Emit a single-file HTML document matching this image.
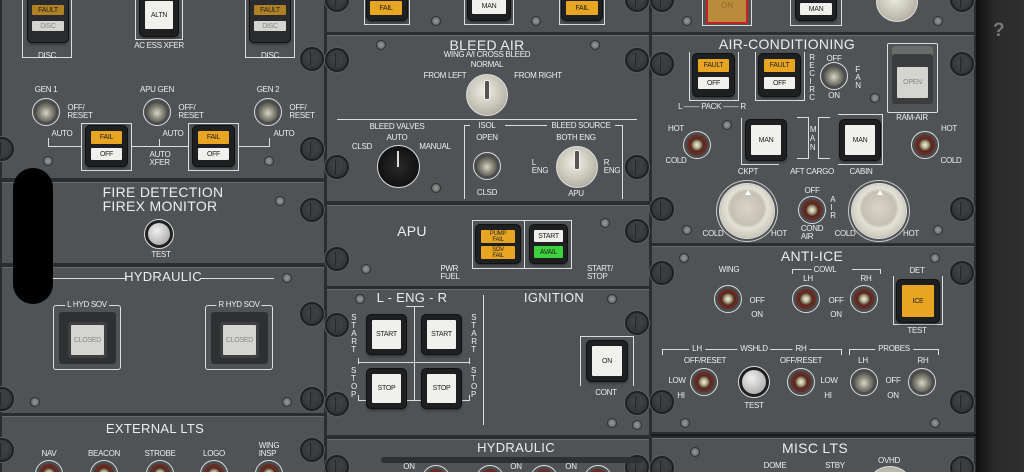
<!DOCTYPE html>
<html style="width:1024px;height:472px;overflow:hidden"><head><meta charset="utf-8"><style>
*{margin:0;padding:0;box-sizing:border-box}
body{width:1024px;height:472px;overflow:hidden;background:#1a1b1c;font-family:"Liberation Sans",sans-serif}
#w{position:relative;width:1024px;height:472px;overflow:hidden}
.p{position:absolute;background:#505356;border:2px solid #2a2c2e;box-shadow:inset 0 1px 0 #676a6d}
.t{position:absolute;color:#eceded;font-size:8px;white-space:nowrap;transform:translateX(-50%);line-height:1;letter-spacing:-0.3px}
.h{font-size:14px;letter-spacing:0.3px}
.k{position:absolute;width:24px;height:24px;border-radius:50%;background:radial-gradient(circle at 50% 40%,#45484b,#2b2d2f);border:2px solid #1f2022;box-shadow:0 0 0 1px #5a5d60}
.k:after{content:"";position:absolute;left:8px;top:3px;width:4px;height:14px;background:#3a3c3e;border-left:1px solid #252627}
.s{position:absolute;width:10px;height:10px;border-radius:50%;background:radial-gradient(#9a9c9e,#555);border:1px solid #2e2f30}
.tg{position:absolute;width:28px;height:28px;border-radius:50%;border:1px solid #dcdcdc;background:#4a4c4f}
.tg:before{content:"";position:absolute;left:3px;top:3px;width:20px;height:20px;border-radius:50%;background:radial-gradient(circle at 50% 50%,#f4f0e0 0,#b8b090 22%,#4a2a22 45%,#7a2a1e 62%,#2a2a2a 80%)}
.tg.g:before{background:radial-gradient(circle at 50% 55%,#d8d6c8 0,#8a887a 40%,#55564f 70%,#2a2a2a 85%)}
.bz{position:absolute;background:#1e1f20;border-radius:4px;box-shadow:0 0 0 1px #111,0 2px 3px #0008}
.l{position:absolute;font-size:7px;color:#222;text-align:center;display:flex;align-items:center;justify-content:center;border-radius:1px;letter-spacing:-0.3px}
.am{background:#e8a521}.wh{background:#f0f0ec}.gr{background:#3ed33e}.dim{background:#d4d4d0;color:#888}
.ln{position:absolute;border-color:#dedede;border-style:solid;border-width:0}
.kn{position:absolute;border-radius:50%;border:1px solid #ddd}
.bk{position:absolute;border-radius:50%;background:radial-gradient(circle at 50% 45%,#d8d4c8 0,#c4c0b3 42%,#e4e1d6 50%,#c9c5b8 75%,#8e8b80 100%);box-shadow:0 0 0 1px #ddd,0 0 0 3px #505356,0 0 0 4px #ccc}
</style></head><body><div id="w">
<div style="position:absolute;left:975px;top:0;width:49px;height:472px;background:linear-gradient(90deg,#0e0e0e,#2a2a2a 40%,#303030)"></div>
<div style="position:absolute;left:993px;top:20px;font-size:19px;font-weight:bold;color:#777">?</div>

<div class="p" style="left:0;top:-4px;width:326px;height:184px"></div>
<div class="p" style="left:0;top:180px;width:326px;height:85px"></div>
<div class="p" style="left:0;top:265px;width:326px;height:150px"></div>
<div class="p" style="left:0;top:414px;width:326px;height:62px"></div>
<div class="p" style="left:325px;top:-4px;width:326px;height:38px"></div>
<div class="p" style="left:325px;top:33px;width:326px;height:170px"></div>
<div class="p" style="left:325px;top:203px;width:326px;height:85px"></div>
<div class="p" style="left:325px;top:287px;width:326px;height:150px"></div>
<div class="p" style="left:325px;top:437px;width:326px;height:40px"></div>
<div class="p" style="left:650px;top:-4px;width:326px;height:38px"></div>
<div class="p" style="left:650px;top:33px;width:326px;height:212px"></div>
<div class="p" style="left:650px;top:244px;width:326px;height:190px"></div>
<div class="p" style="left:650px;top:436px;width:326px;height:40px"></div>

<div class="k" style="left:-10px;top:137px"></div><div class="k" style="left:300px;top:137px"></div>
<div class="k" style="left:300px;top:198px"></div><div class="k" style="left:300px;top:47px"></div>
<div class="k" style="left:300px;top:302px"></div><div class="k" style="left:300px;top:387px"></div>
<div class="k" style="left:-10px;top:387px"></div><div class="k" style="left:-10px;top:438px"></div><div class="k" style="left:300px;top:438px"></div>
<div class="k" style="left:325px;top:-12px"></div><div class="k" style="left:625px;top:-12px"></div>
<div class="k" style="left:325px;top:48px"></div><div class="k" style="left:625px;top:48px"></div>
<div class="k" style="left:325px;top:155px"></div><div class="k" style="left:625px;top:155px"></div>
<div class="k" style="left:325px;top:247px"></div><div class="k" style="left:625px;top:219px"></div>
<div class="k" style="left:325px;top:313px"></div><div class="k" style="left:625px;top:311px"></div>
<div class="k" style="left:325px;top:392px"></div><div class="k" style="left:625px;top:391px"></div>
<div class="k" style="left:325px;top:455px"></div><div class="k" style="left:625px;top:455px"></div>
<div class="k" style="left:650px;top:-12px"></div><div class="k" style="left:950px;top:-12px"></div>
<div class="k" style="left:650px;top:52px"></div><div class="k" style="left:950px;top:52px"></div>
<div class="k" style="left:650px;top:197px"></div><div class="k" style="left:950px;top:197px"></div>
<div class="k" style="left:650px;top:261px"></div><div class="k" style="left:950px;top:261px"></div>
<div class="k" style="left:650px;top:390px"></div><div class="k" style="left:950px;top:390px"></div>
<div class="k" style="left:650px;top:456px"></div><div class="k" style="left:950px;top:456px"></div>

<div class="s" style="left:43px;top:156px"></div><div class="s" style="left:264px;top:156px"></div>
<div class="s" style="left:275px;top:196px"></div><div class="s" style="left:282px;top:273px"></div>
<div class="s" style="left:30px;top:397px"></div><div class="s" style="left:282px;top:397px"></div>
<div class="s" style="left:431px;top:16px"></div><div class="s" style="left:531px;top:16px"></div>
<div class="s" style="left:376px;top:40px"></div><div class="s" style="left:590px;top:40px"></div>
<div class="s" style="left:431px;top:183px"></div><div class="s" style="left:600px;top:218px"></div><div class="s" style="left:361px;top:264px"></div>
<div class="s" style="left:355px;top:294px"></div><div class="s" style="left:607px;top:294px"></div><div class="s" style="left:607px;top:418px"></div><div class="s" style="left:632px;top:420px"></div>
<div class="s" style="left:682px;top:16px"></div><div class="s" style="left:933px;top:16px"></div>
<div class="s" style="left:870px;top:93px"></div><div class="s" style="left:722px;top:120px"></div>
<div class="s" style="left:682px;top:225px"></div><div class="s" style="left:933px;top:225px"></div>
<div class="s" style="left:679px;top:253px"></div><div class="s" style="left:930px;top:253px"></div>
<div class="s" style="left:680px;top:418px"></div><div class="s" style="left:930px;top:418px"></div>
<div class="s" style="left:690px;top:447px"></div>

<div class="ln" style="left:22px;top:0;width:50px;height:58px;border-width:0 1px 1px 1px"></div>
<div class="bz" style="left:28px;top:-4px;width:40px;height:46px;background:#2a2b2c"></div>
<div class="l am" style="left:32px;top:5px;width:32px;height:10px;opacity:.7">FAULT</div>
<div class="l dim" style="left:32px;top:21px;width:32px;height:10px">DISC</div>
<div class="t" style="left:47px;top:52px">DISC</div>
<div class="ln" style="left:245px;top:0;width:50px;height:58px;border-width:0 1px 1px 1px"></div>
<div class="bz" style="left:250px;top:-4px;width:40px;height:46px;background:#2a2b2c"></div>
<div class="l am" style="left:254px;top:5px;width:32px;height:10px;opacity:.7">FAULT</div>
<div class="l dim" style="left:254px;top:21px;width:32px;height:10px">DISC</div>
<div class="t" style="left:270px;top:52px">DISC</div>
<div class="ln" style="left:135px;top:0;width:48px;height:40px;border-width:0 1px 1px 1px"></div>
<div class="bz" style="left:140px;top:-4px;width:38px;height:40px"></div>
<div class="l wh" style="left:145px;top:1px;width:28px;height:28px">ALTN</div>
<div class="t" style="left:159px;top:42px">AC ESS XFER</div>

<div class="t" style="left:46px;top:86px">GEN 1</div><div class="t" style="left:157px;top:86px">APU GEN</div><div class="t" style="left:268px;top:86px">GEN 2</div>
<div class="tg g" style="left:32px;top:98px"></div><div class="tg g" style="left:143px;top:98px"></div><div class="tg g" style="left:254px;top:98px"></div>
<div class="t" style="left:80px;top:104px;text-align:left">OFF/<br>RESET</div><div class="t" style="left:191px;top:104px">OFF/<br>RESET</div><div class="t" style="left:302px;top:104px">OFF/<br>RESET</div>
<div class="t" style="left:62px;top:130px">AUTO</div><div class="t" style="left:173px;top:130px">AUTO</div><div class="t" style="left:284px;top:130px">AUTO</div>
<div class="ln" style="left:48px;top:138px;width:34px;height:9px;border-width:0 0 1px 1px"></div>
<div class="ln" style="left:81px;top:123px;width:51px;height:48px;border-width:1px"></div>
<div class="ln" style="left:132px;top:146px;width:57px;height:1px;border-width:1px 0 0 0"></div>
<div class="ln" style="left:159px;top:139px;width:1px;height:8px;border-width:0 0 0 1px"></div>
<div class="ln" style="left:188px;top:123px;width:51px;height:48px;border-width:1px"></div>
<div class="ln" style="left:239px;top:138px;width:31px;height:9px;border-width:0 1px 1px 0"></div>
<div class="bz" style="left:86px;top:126px;width:41px;height:40px"></div>
<div class="l am" style="left:91px;top:131px;width:31px;height:13px">FAIL</div>
<div class="l wh" style="left:91px;top:148px;width:31px;height:12px">OFF</div>
<div class="bz" style="left:193px;top:126px;width:41px;height:40px"></div>
<div class="l am" style="left:198px;top:131px;width:31px;height:13px">FAIL</div>
<div class="l wh" style="left:198px;top:148px;width:31px;height:12px">OFF</div>
<div class="t" style="left:160px;top:151px">AUTO<br>XFER</div>

<div class="t h" style="left:163px;top:185px">FIRE DETECTION<br>FIREX MONITOR</div>
<div class="kn" style="left:144px;top:219px;width:30px;height:30px;background:#222"></div>
<div style="position:absolute;left:148px;top:223px;width:22px;height:22px;border-radius:50%;background:radial-gradient(circle at 40% 35%,#f0f0f0,#9a9a9a)"></div>
<div class="t" style="left:161px;top:251px">TEST</div>

<div class="ln" style="left:52px;top:278px;width:75px;height:1px;border-width:1px 0 0 0"></div>
<div class="ln" style="left:200px;top:278px;width:74px;height:1px;border-width:1px 0 0 0"></div>
<div class="t h" style="left:163px;top:270px;font-size:13px">HYDRAULIC</div>
<div class="ln" style="left:53px;top:305px;width:68px;height:65px;border-width:1px;border-radius:3px"></div>
<div class="t" style="left:87px;top:301px;background:#505356;padding:0 2px">L HYD SOV</div>
<div style="position:absolute;left:59px;top:312px;width:57px;height:52px;background:#2e3032;border-radius:3px"></div>
<div class="l dim" style="left:71px;top:325px;width:33px;height:30px;box-shadow:0 0 0 3px #3e4042">CLOSED</div>
<div class="ln" style="left:205px;top:305px;width:68px;height:65px;border-width:1px;border-radius:3px"></div>
<div class="t" style="left:239px;top:301px;background:#505356;padding:0 2px">R HYD SOV</div>
<div style="position:absolute;left:211px;top:312px;width:57px;height:52px;background:#2e3032;border-radius:3px"></div>
<div class="l dim" style="left:223px;top:325px;width:33px;height:30px;box-shadow:0 0 0 3px #3e4042">CLOSED</div>

<div class="t h" style="left:155px;top:422px;font-size:13px">EXTERNAL LTS</div>
<div class="t" style="left:49px;top:450px">NAV</div><div class="t" style="left:104px;top:450px">BEACON</div><div class="t" style="left:160px;top:450px">STROBE</div><div class="t" style="left:214px;top:450px">LOGO</div><div class="t" style="left:269px;top:442px">WING<br>INSP</div>
<div class="tg" style="left:35px;top:460px"></div><div class="tg" style="left:90px;top:460px"></div><div class="tg" style="left:146px;top:460px"></div><div class="tg" style="left:200px;top:460px"></div><div class="tg" style="left:255px;top:460px"></div>

<div style="position:absolute;left:13px;top:168px;width:40px;height:136px;background:#000;border-radius:20px"></div>

<div class="ln" style="left:364px;top:0;width:46px;height:25px;border-width:0 1px 1px 1px"></div>
<div class="bz" style="left:367px;top:-4px;width:40px;height:24px"></div><div class="l am" style="left:370px;top:1px;width:32px;height:14px">FAIL</div>
<div class="ln" style="left:464px;top:0;width:50px;height:25px;border-width:0 1px 1px 1px"></div>
<div class="bz" style="left:468px;top:-4px;width:42px;height:24px"></div><div class="l wh" style="left:472px;top:-2px;width:34px;height:16px">MAN</div>
<div class="ln" style="left:559px;top:0;width:46px;height:25px;border-width:0 1px 1px 1px"></div>
<div class="bz" style="left:562px;top:-4px;width:40px;height:24px"></div><div class="l am" style="left:566px;top:1px;width:32px;height:14px">FAIL</div>

<div class="t h" style="left:487px;top:38px">BLEED AIR</div>
<div class="t" style="left:487px;top:51px">WING A/I CROSS BLEED</div>
<div class="t" style="left:487px;top:61px">NORMAL</div>
<div class="t" style="left:445px;top:72px">FROM LEFT</div>
<div class="t" style="left:538px;top:72px">FROM RIGHT</div>
<div class="kn" style="left:466px;top:74px;width:42px;height:42px;background:radial-gradient(circle at 45% 40%,#f2f0e6,#b8b5a8 70%,#6a6860)"></div>
<div style="position:absolute;left:484px;top:80px;width:6px;height:20px;background:#555;border:1px solid #eee;border-radius:2px"></div>
<div class="ln" style="left:337px;top:119px;width:300px;height:1px;border-width:1px 0 0 0"></div>
<div class="t" style="left:397px;top:123px">BLEED VALVES</div>
<div class="t" style="left:397px;top:134px">AUTO</div>
<div class="t" style="left:362px;top:143px">CLSD</div>
<div class="t" style="left:435px;top:143px">MANUAL</div>
<div class="kn" style="left:377px;top:145px;width:43px;height:43px;background:radial-gradient(circle at 50% 50%,#2a2a2a,#111 70%,#333)"></div>
<div style="position:absolute;left:397px;top:151px;width:2px;height:16px;background:#ddd"></div>
<div class="ln" style="left:464px;top:125px;width:1px;height:74px;border-width:0 0 0 1px"></div>
<div class="ln" style="left:464px;top:125px;width:6px;height:1px;border-width:1px 0 0 0"></div>
<div class="ln" style="left:505px;top:125px;width:42px;height:1px;border-width:1px 0 0 0"></div>
<div class="ln" style="left:615px;top:125px;width:8px;height:74px;border-width:1px 1px 0 0"></div>
<div class="t" style="left:487px;top:122px">ISOL</div>
<div class="t" style="left:581px;top:122px">BLEED SOURCE</div>
<div class="t" style="left:487px;top:134px">OPEN</div>
<div class="tg g" style="left:473px;top:152px"></div>
<div class="t" style="left:487px;top:189px">CLSD</div>
<div class="t" style="left:576px;top:134px">BOTH ENG</div>
<div class="t" style="left:540px;top:159px">L<br>ENG</div>
<div class="t" style="left:612px;top:159px">R<br>ENG</div>
<div class="t" style="left:576px;top:190px">APU</div>
<div class="kn" style="left:556px;top:146px;width:42px;height:42px;background:radial-gradient(circle at 45% 40%,#f2f0e6,#b8b5a8 70%,#6a6860)"></div>
<div style="position:absolute;left:574px;top:150px;width:6px;height:20px;background:#555;border:1px solid #eee;border-radius:2px"></div>

<div class="t h" style="left:412px;top:224px">APU</div>
<div class="t" style="left:450px;top:265px">PWR<br>FUEL</div>
<div class="t" style="left:600px;top:265px">START/<br>STOP</div>
<div class="ln" style="left:472px;top:220px;width:53px;height:49px;border-width:1px"></div>
<div class="ln" style="left:524px;top:220px;width:48px;height:49px;border-width:1px 1px 1px 0"></div>
<div class="bz" style="left:476px;top:225px;width:44px;height:38px"></div>
<div class="l am" style="left:481px;top:230px;width:34px;height:13px;font-size:6px;line-height:6px">PUMP<br>FAIL</div>
<div class="l am" style="left:481px;top:246px;width:34px;height:13px;font-size:6px;line-height:6px">SOV<br>FAIL</div>
<div class="bz" style="left:530px;top:225px;width:37px;height:38px"></div>
<div class="l wh" style="left:534px;top:230px;width:29px;height:12px">START</div>
<div class="l gr" style="left:534px;top:246px;width:29px;height:12px">AVAIL</div>

<div class="t h" style="left:412px;top:291px;font-size:13px">L - ENG - R</div>
<div class="ln" style="left:406px;top:306px;width:18px;height:1px;border-width:1px 0 0 0"></div>
<div class="ln" style="left:414px;top:306px;width:1px;height:95px;border-width:0 0 0 1px"></div>
<div class="ln" style="left:358px;top:362px;width:112px;height:1px;border-width:1px 0 0 0"></div>
<div class="ln" style="left:358px;top:358px;width:112px;height:6px;border-width:0 1px 0 1px"></div>
<div class="ln" style="left:358px;top:395px;width:112px;height:6px;border-width:0 1px 1px 1px"></div>
<div class="t" style="left:354px;top:314px;line-height:8px">S<br>T<br>A<br>R<br>T</div>
<div class="t" style="left:474px;top:314px;line-height:8px">S<br>T<br>A<br>R<br>T</div>
<div class="t" style="left:354px;top:367px;line-height:8px">S<br>T<br>O<br>P</div>
<div class="t" style="left:474px;top:367px;line-height:8px">S<br>T<br>O<br>P</div>
<div class="bz" style="left:367px;top:315px;width:39px;height:39px"></div><div class="l wh" style="left:372px;top:320px;width:29px;height:29px">START</div>
<div class="bz" style="left:422px;top:315px;width:39px;height:39px"></div><div class="l wh" style="left:427px;top:320px;width:29px;height:29px">START</div>
<div class="bz" style="left:367px;top:369px;width:39px;height:39px"></div><div class="l wh" style="left:372px;top:374px;width:29px;height:29px">STOP</div>
<div class="bz" style="left:422px;top:369px;width:39px;height:39px"></div><div class="l wh" style="left:427px;top:374px;width:29px;height:29px">STOP</div>
<div class="ln" style="left:483px;top:295px;width:1px;height:130px;border-width:0 0 0 1px"></div>
<div class="t h" style="left:554px;top:291px;font-size:13px">IGNITION</div>
<div class="ln" style="left:580px;top:336px;width:54px;height:50px;border-width:1px 1px 0 1px"></div>
<div class="bz" style="left:587px;top:341px;width:40px;height:40px"></div><div class="l wh" style="left:592px;top:346px;width:30px;height:30px">ON</div>
<div class="t" style="left:606px;top:389px">CONT</div>

<div class="t h" style="left:516px;top:441px;font-size:13px">HYDRAULIC</div>
<div style="position:absolute;left:381px;top:457px;width:262px;height:6px;background:#2e3032;border-radius:3px"></div>
<div class="t" style="left:409px;top:463px">ON</div><div class="t" style="left:516px;top:463px">ON</div><div class="t" style="left:571px;top:463px">ON</div>
<div class="tg" style="left:422px;top:465px"></div><div class="tg" style="left:476px;top:465px"></div><div class="tg" style="left:530px;top:465px"></div><div class="tg" style="left:584px;top:465px"></div>

<div class="ln" style="left:702px;top:0;width:50px;height:26px;border-width:0 1px 1px 1px"></div>
<div style="position:absolute;left:706px;top:-4px;width:42px;height:28px;background:#b88c3a;border:2px solid #c8202a;border-radius:2px"></div>
<div class="t" style="left:727px;top:2px;color:#8a6a30">ON</div>
<div class="ln" style="left:790px;top:0;width:52px;height:26px;border-width:0 1px 1px 1px"></div>
<div class="bz" style="left:796px;top:-4px;width:40px;height:24px"></div><div class="l wh" style="left:800px;top:3px;width:32px;height:12px">MAN</div>
<div class="kn" style="left:876px;top:-18px;width:42px;height:40px;background:radial-gradient(circle at 45% 40%,#eeebe0,#b8b5a8 70%,#6a6860)"></div>

<div class="t h" style="left:787px;top:37px">AIR-CONDITIONING</div>
<div class="ln" style="left:689px;top:52px;width:50px;height:49px;border-width:0 1px 1px 1px"></div>
<div class="ln" style="left:755px;top:52px;width:50px;height:49px;border-width:0 1px 1px 1px"></div>
<div class="bz" style="left:693px;top:54px;width:41px;height:42px"></div>
<div class="l am" style="left:698px;top:59px;width:31px;height:13px">FAULT</div><div class="l wh" style="left:698px;top:77px;width:31px;height:12px">OFF</div>
<div class="bz" style="left:759px;top:54px;width:41px;height:42px"></div>
<div class="l am" style="left:764px;top:59px;width:31px;height:13px">FAULT</div><div class="l wh" style="left:764px;top:77px;width:31px;height:12px">OFF</div>
<div class="t" style="left:712px;top:103px">L —— PACK —— R</div>
<div class="t" style="left:812px;top:54px;line-height:8px">R<br>E<br>C<br>I<br>R<br>C</div>
<div class="t" style="left:858px;top:66px;line-height:8px">F<br>A<br>N</div>
<div class="t" style="left:834px;top:55px">OFF</div><div class="t" style="left:834px;top:92px">ON</div>
<div class="tg g" style="left:820px;top:62px"></div>
<div class="ln" style="left:887px;top:43px;width:51px;height:70px;border-width:1px;border-radius:2px"></div>
<div style="position:absolute;left:892px;top:46px;width:41px;height:58px;background:#3a3c3e;border-radius:3px;box-shadow:inset 0 8px 0 #6a6c6a"></div>
<div class="l dim" style="left:897px;top:67px;width:31px;height:31px">OPEN</div>
<div class="t" style="left:912px;top:114px">RAM-AIR</div>

<div class="t" style="left:676px;top:125px">HOT</div><div class="t" style="left:676px;top:157px">COLD</div>
<div class="tg" style="left:683px;top:131px"></div>
<div class="t" style="left:949px;top:125px">HOT</div><div class="t" style="left:951px;top:157px">COLD</div>
<div class="tg" style="left:911px;top:131px"></div>
<div class="ln" style="left:741px;top:118px;width:1px;height:47px;border-width:0 0 0 1px"></div>
<div class="ln" style="left:741px;top:164px;width:38px;height:1px;border-width:1px 0 0 0"></div>
<div class="bz" style="left:746px;top:120px;width:40px;height:40px"></div><div class="l wh" style="left:751px;top:125px;width:30px;height:30px">MAN</div>
<div class="ln" style="left:797px;top:117px;width:12px;height:42px;border-width:1px 1px 1px 0"></div>
<div class="ln" style="left:818px;top:117px;width:12px;height:42px;border-width:1px 0 1px 1px"></div>
<div class="t" style="left:813px;top:125px;line-height:9px">M<br>A<br>N</div>
<div class="ln" style="left:838px;top:114px;width:45px;height:51px;border-width:1px 1px 1px 0"></div>
<div class="bz" style="left:840px;top:120px;width:40px;height:40px"></div><div class="l wh" style="left:845px;top:125px;width:30px;height:30px">MAN</div>
<div class="t" style="left:748px;top:168px">CKPT</div><div class="t" style="left:812px;top:168px">AFT CARGO</div><div class="t" style="left:861px;top:168px">CABIN</div>
<div class="bk" style="left:720px;top:184px;width:54px;height:54px"></div>
<div class="bk" style="left:852px;top:184px;width:54px;height:54px"></div>
<div style="position:absolute;left:745px;top:187px;width:0;height:0;border:3px solid transparent;border-bottom:5px solid #fff"></div>
<div style="position:absolute;left:877px;top:187px;width:0;height:0;border:3px solid transparent;border-bottom:5px solid #fff"></div>
<div class="t" style="left:713px;top:230px">COLD</div><div class="t" style="left:779px;top:230px">HOT</div>
<div class="t" style="left:845px;top:230px">COLD</div><div class="t" style="left:911px;top:230px">HOT</div>
<div class="t" style="left:812px;top:187px">OFF</div>
<div class="tg" style="left:798px;top:196px"></div>
<div class="t" style="left:833px;top:196px;line-height:8px">A<br>I<br>R</div>
<div class="t" style="left:812px;top:225px">COND<br>AIR</div>

<div class="t h" style="left:812px;top:249px">ANTI-ICE</div>
<div class="t" style="left:729px;top:266px">WING</div>
<div class="tg" style="left:714px;top:285px"></div>
<div class="t" style="left:757px;top:297px">OFF</div><div class="t" style="left:757px;top:311px">ON</div>
<div class="ln" style="left:792px;top:269px;width:39px;height:5px;border-width:1px 0 0 1px"></div>
<div class="ln" style="left:852px;top:269px;width:29px;height:5px;border-width:1px 1px 0 0"></div>
<div class="t" style="left:825px;top:266px;background:#505356;padding:0 2px">COWL</div>
<div class="t" style="left:808px;top:275px">LH</div><div class="t" style="left:866px;top:275px">RH</div>
<div class="tg" style="left:792px;top:285px"></div><div class="tg" style="left:850px;top:285px"></div>
<div class="t" style="left:836px;top:297px">OFF</div><div class="t" style="left:836px;top:311px">ON</div>
<div class="t" style="left:917px;top:267px">DET</div>
<div class="ln" style="left:893px;top:276px;width:50px;height:49px;border-width:0 1px 1px 1px"></div>
<div class="bz" style="left:897px;top:280px;width:42px;height:42px"></div><div class="l am" style="left:902px;top:285px;width:32px;height:32px">ICE</div>
<div class="t" style="left:917px;top:327px">TEST</div>
<div class="ln" style="left:662px;top:349px;width:180px;height:6px;border-width:1px 1px 0 1px"></div>
<div class="t" style="left:697px;top:345px;background:#505356;padding:0 3px">LH</div>
<div class="t" style="left:754px;top:345px;background:#505356;padding:0 3px">WSHLD</div>
<div class="t" style="left:801px;top:345px;background:#505356;padding:0 3px">RH</div>
<div class="ln" style="left:849px;top:349px;width:90px;height:6px;border-width:1px 1px 0 1px"></div>
<div class="t" style="left:894px;top:345px;background:#505356;padding:0 3px">PROBES</div>
<div class="t" style="left:705px;top:357px">OFF/RESET</div><div class="t" style="left:801px;top:357px">OFF/RESET</div>
<div class="t" style="left:863px;top:357px">LH</div><div class="t" style="left:923px;top:357px">RH</div>
<div class="t" style="left:677px;top:377px">LOW</div><div class="t" style="left:681px;top:392px">HI</div>
<div class="t" style="left:829px;top:377px">LOW</div><div class="t" style="left:828px;top:392px">HI</div>
<div class="tg" style="left:690px;top:368px"></div><div class="tg" style="left:787px;top:368px"></div>
<div class="kn" style="left:738px;top:366px;width:32px;height:32px;background:#1e1e1e"></div>
<div style="position:absolute;left:742px;top:370px;width:24px;height:24px;border-radius:50%;background:radial-gradient(circle at 40% 35%,#f0f0f0,#9a9a9a)"></div>
<div class="t" style="left:754px;top:402px">TEST</div>
<div class="tg g" style="left:850px;top:368px"></div><div class="tg g" style="left:908px;top:368px"></div>
<div class="t" style="left:893px;top:377px">OFF</div><div class="t" style="left:893px;top:392px">ON</div>

<div class="t h" style="left:815px;top:441px">MISC LTS</div>
<div class="t" style="left:775px;top:462px">DOME</div><div class="t" style="left:835px;top:462px">STBY</div><div class="t" style="left:889px;top:457px">OVHD</div>
<div class="kn" style="left:866px;top:466px;width:48px;height:48px;background:radial-gradient(#d8d5ca,#a8a598)"></div>
</div></body></html>
